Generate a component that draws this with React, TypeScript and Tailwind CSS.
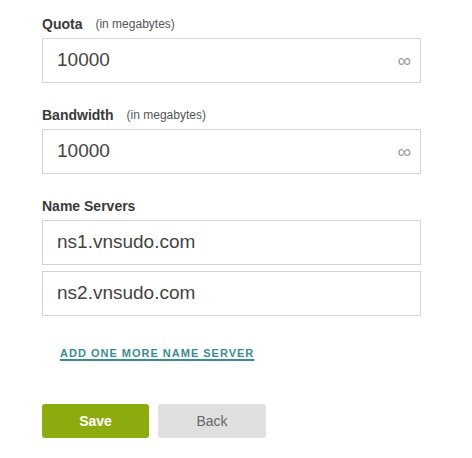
const font = { fontFamily: '"Liberation Sans", Arial, sans-serif' };

const Field = ({ value, unlimited }: { value: string; unlimited?: boolean }) => (
  <div className="flex h-[45px] w-[379px] items-center justify-between border border-[#d4d4d4] bg-white pl-[14px] pr-[9px]">
    <span className="text-[19px] text-[#444]">{value}</span>
    {unlimited && <span className="text-[19px] leading-none text-[#999]">∞</span>}
  </div>
);

const Label = ({ title, hint }: { title: string; hint?: string }) => (
  <div className="flex h-[20px] items-center">
    <span className="text-[14px] font-bold text-[#3a3a3a]">{title}</span>
    {hint && <span className="ml-[13px] text-[12px] text-[#555]">{hint}</span>}
  </div>
);

export default function App() {
  return (
    <div className="min-h-[458px] w-[472px] bg-white pl-[42px] pt-[14px]" style={font}>
      <Label title="Quota" hint="(in megabytes)" />
      <div className="mt-[4px]">
        <Field value="10000" unlimited />
      </div>

      <div className="mt-[22px]">
        <Label title="Bandwidth" hint="(in megabytes)" />
      </div>
      <div className="mt-[4px]">
        <Field value="10000" unlimited />
      </div>

      <div className="mt-[22px]">
        <Label title="Name Servers" />
      </div>
      <div className="mt-[4px] flex flex-col gap-[6px]">
        <Field value="ns1.vnsudo.com" />
        <Field value="ns2.vnsudo.com" />
      </div>

      <div className="ml-[18px] mt-[24px]">
        <a
          href="#"
          className="text-[11px] font-bold uppercase tracking-[1px] text-[#3b8c92] underline decoration-[1.5px] underline-offset-[2px]"
        >
          Add one more name server
        </a>
      </div>

      <div className="mt-[40px] flex gap-[9px]">
        <button className="h-[34px] w-[107px] rounded-[3px] bg-[#8cab0f] text-[14px] font-bold text-white">
          Save
        </button>
        <button className="h-[34px] w-[108px] rounded-[3px] bg-[#e0e0e0] text-[14px] text-[#666]">
          Back
        </button>
      </div>
    </div>
  );
}
